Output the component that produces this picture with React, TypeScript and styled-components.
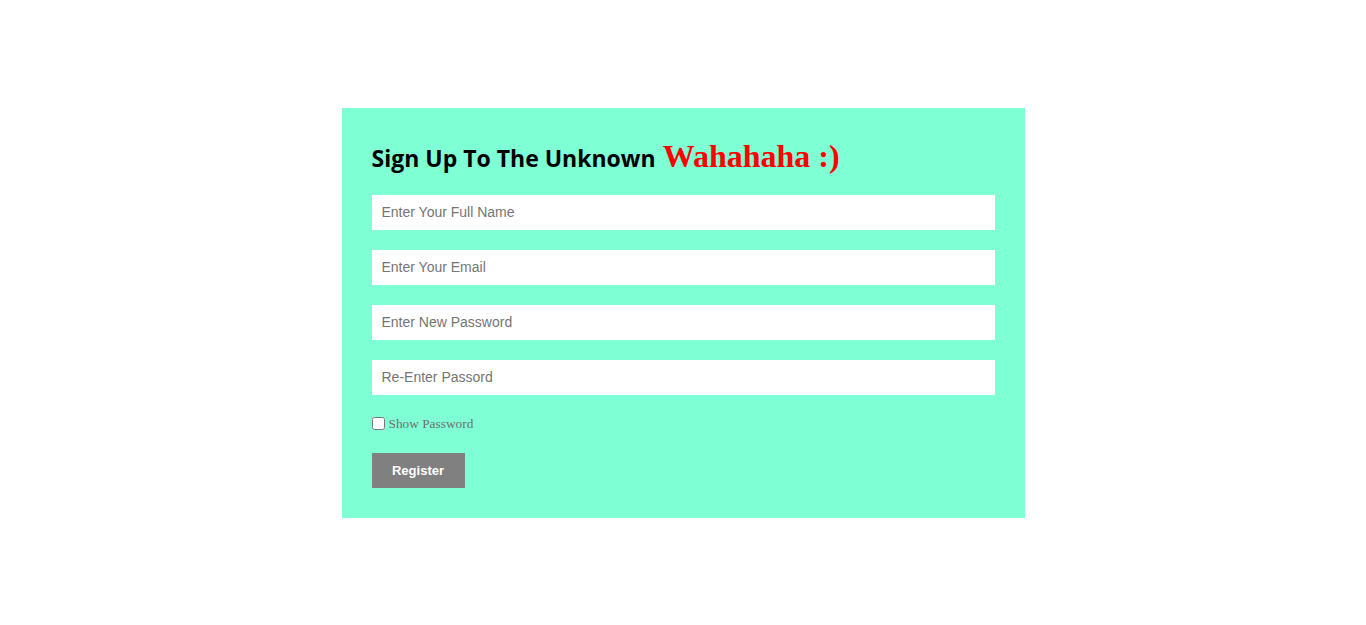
import React from "react";
import styled, { createGlobalStyle } from "styled-components";

const Global = createGlobalStyle`
  html, body { margin: 0; padding: 0; background: #fff; }
  * { box-sizing: border-box; }
`;

const Page = styled.div`
  min-height: 100vh;
  display: flex;
  align-items: center;
  justify-content: center;
`;

const Card = styled.form`
  width: 683px;
  padding: 30px;
  background: #7fffd4;
  display: flex;
  flex-direction: column;
`;

const Title = styled.h2`
  margin: 0 0 17px;
  height: 40px;
  display: flex;
  align-items: baseline;
  gap: 7px;
  font-family: "Open Sans", "Noto Sans", sans-serif;
  font-weight: 700;
  font-size: 23px;
  line-height: 36px;
  color: #000;
`;

const Laugh = styled.span`
  font-family: "Liberation Serif", serif;
  font-size: 32px;
  font-weight: 700;
  color: #ff0000;
`;

const Field = styled.input`
  display: block;
  width: 100%;
  height: 35px;
  margin: 0 0 20px;
  padding: 0 10px;
  border: none;
  outline: none;
  background: #fff;
  font-family: "Liberation Sans", Arial, sans-serif;
  font-size: 14px;
  color: #000;
  &::placeholder { color: #757575; }
`;

const CheckRow = styled.label`
  display: flex;
  align-items: center;
  height: 14px;
  margin: 1px 0 23px;
  font-family: "Liberation Serif", serif;
  font-size: 13.33px;
  color: #6f6f6f;
`;

const CheckText = styled.span`
  margin-top: 3px;
`;

const Check = styled.input`
  width: 13px;
  height: 13px;
  margin: 1px 4px 0 0;
`;

const Button = styled.button`
  align-self: flex-start;
  width: 93px;
  height: 35px;
  border: none;
  background: #808080;
  color: #fff;
  font-family: "Liberation Sans", Arial, sans-serif;
  font-weight: 700;
  font-size: 13px;
`;

export default function App() {
  return (
    <>
      <Global />
      <Page>
        <Card onSubmit={(e) => e.preventDefault()}>
          <Title>
            <span>Sign Up To The Unknown</span>
            <Laugh>Wahahaha :)</Laugh>
          </Title>
          <Field type="text" placeholder="Enter Your Full Name" />
          <Field type="email" placeholder="Enter Your Email" />
          <Field type="password" placeholder="Enter New Password" />
          <Field type="password" placeholder="Re-Enter Passord" />
          <CheckRow>
            <Check type="checkbox" />
            <CheckText>Show Password</CheckText>
          </CheckRow>
          <Button type="submit">Register</Button>
        </Card>
      </Page>
    </>
  );
}
